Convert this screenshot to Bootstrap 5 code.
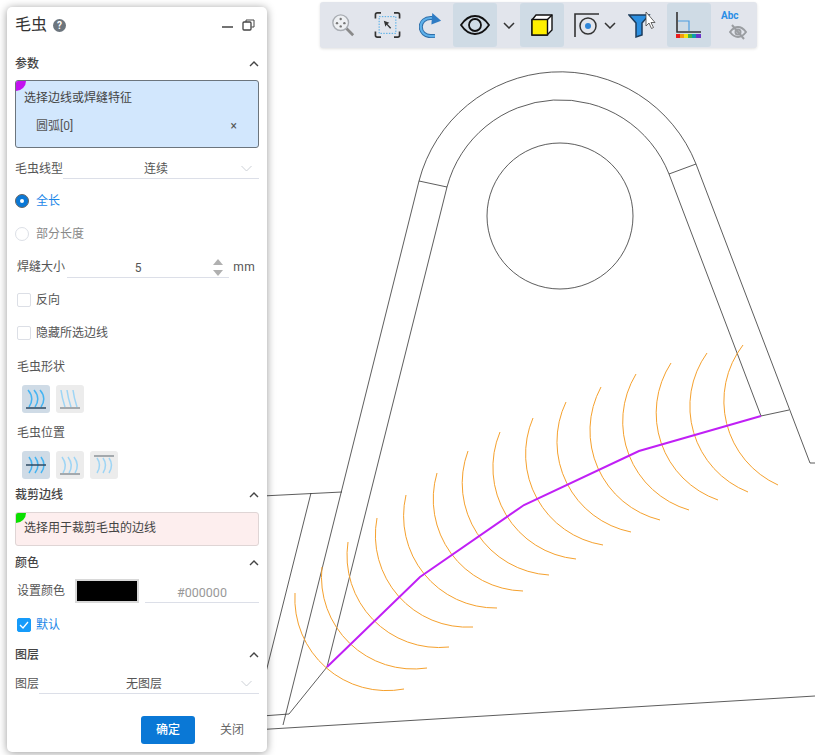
<!DOCTYPE html>
<html lang="zh">
<head>
<meta charset="utf-8">
<title>毛虫</title>
<link href="https://cdn.jsdelivr.net/npm/bootstrap@5.3.0/dist/css/bootstrap.min.css" rel="stylesheet">
<style>
html,body{margin:0;height:755px;overflow:hidden;background:#fff}
body{position:relative;width:815px;font-family:Roboto,"Noto Sans CJK SC",sans-serif;font-size:12px;color:#555}
.cad-canvas{position:absolute;left:0;top:0;width:815px;height:755px}
.side-panel{position:absolute;left:7px;top:7px;width:260px;height:745px;background:#fff;border-radius:5px;box-shadow:0 1px 8px rgba(0,0,0,.4);padding:0 8px;display:flex;flex-direction:column}
.panel-head{height:36px;flex:none;padding-right:4px}
.panel-title{font-size:16px;color:#333;line-height:36px}
.help-dot{width:13px;height:13px;border-radius:50%;background:#6c757d;color:#fff;font-size:10px;font-weight:700;line-height:13px;text-align:center;margin-left:6px}
.sec-head{height:24px;flex:none;font-weight:500;color:#444}
.pick-box{position:relative;border-radius:3px;padding-left:8px;flex:none;overflow:hidden;color:#444}
.pick-blue{height:68px;background:#d2e7fd;border:1px solid #6c757d;margin-top:4px}
.pick-red{height:34px;background:#fdeeee;border:1px solid #dfd5d5;margin-top:5px;line-height:31px}
.pick-corner{position:absolute;left:0;top:0;width:10px;height:10px;border-bottom-right-radius:10px}
.corner-m{background:#c311f0}
.corner-g{background:#0be000}
.pick-title{line-height:14px;margin-top:10px}
.pick-item{padding-left:12px;margin-top:14px;padding-right:21px;line-height:14px;color:#555}
.row-line{flex:none;display:flex;align-items:center}
.under{border-bottom:1px solid #dcdfe8;flex:1;height:19px;line-height:18px;position:relative}
.under-center{text-align:center}
.h-22{height:22px}
.h-33{height:33px}
.row-indent{padding-left:2px}
.round-mark{width:14px;height:14px;border-radius:50%;border:1px solid #dcdfe6;margin-right:7px;flex:none;background:#fff}
.round-on{background:#0a78d6;border:1px solid #666;position:relative}
.round-on::after{content:"";position:absolute;left:4px;top:4px;width:4px;height:4px;border-radius:50%;background:#fff}
.square-mark{width:14px;height:14px;border-radius:2px;border:1px solid #dcdfe6;margin-right:5px;flex:none;background:#fff;display:flex;align-items:center;justify-content:center}
.square-on{background:#169bfa;border-color:#169bfa}
.label-on{color:#1a86e8}
.label-dim{color:#888}
.icon-row{height:28px;flex:none;gap:6px;padding-left:7px}
.shape-btn{width:28px;height:28px;border-radius:3px;background:#ececec;display:flex;align-items:center;justify-content:center}
.shape-on{background:#cfdbe6}
.swatch{width:64px;height:24px;background:#000;border:2px solid #d8d8d8;margin:0 6px 0 10px}
.confirm-btn{width:54px;height:28px;background:#0a78d6;color:#fff;font-size:12px;padding:0;border:0;border-radius:3px;font-weight:500}
.close-btn{width:54px;height:28px;font-size:12px;color:#666;padding:0;border:0;background:transparent;margin-left:10px}
.tool-bar{position:absolute;left:320px;top:2px;width:437px;height:46px;background:#e2e5ec;border-radius:3px;box-shadow:0 1px 3px rgba(0,0,0,.12);display:flex;align-items:center}
.tool-slot{height:44px;display:flex;align-items:center;justify-content:center;flex:none;border-radius:3px}
.tool-on{background:#cfdbe5}
.w-44{width:44px}
.abc-mark{font-size:10px;font-weight:700;color:#2a8ee6;line-height:10px;position:absolute;left:10px;top:8px}
.spin-arrows{position:absolute;right:6px;top:-1px}
</style>
</head>
<body>
<svg class="cad-canvas" viewBox="0 0 815 755" fill="none">
  <g stroke="#333" stroke-width=".8">
    <circle cx="560" cy="216" r="73"/>
    <path d="M447 187A117 117 0 0 1 669 174"/>
    <path d="M419 181A146 146 0 0 1 696 164"/>
    <path d="M419 181L447 187M696 164L669 174"/>
    <path d="M419 181L283 725M447 187L327 667M327 667L289 714L262 716"/>
    <path d="M311 493L262 688M262 496L342 492"/>
    <path d="M262 729.500L815 696"/>
    <path d="M669 174L761 416L789 410M696 164L810 463L815 463"/>
  </g>
  <g stroke="#f5a12e" stroke-width="1">
    <path d="M295 593A92 92 0 0 0 404 689"/>
    <path d="M322 567A92 92 0 0 0 427 668"/>
    <path d="M348 542A92 92 0 0 0 449 647"/>
    <path d="M377 518A92 92 0 0 0 473 627"/>
    <path d="M406 495A92 92 0 0 0 497 608"/>
    <path d="M437 473A92 92 0 0 0 523 591"/>
    <path d="M468 451A92 92 0 0 0 549 575"/>
    <path d="M500 432A92 92 0 0 0 576 559"/>
    <path d="M533 418A92 92 0 0 0 603 545"/>
    <path d="M566 402A92 92 0 0 0 631 532"/>
    <path d="M601 387A92 92 0 0 0 660 520"/>
    <path d="M636 374A92 92 0 0 0 689 510"/>
    <path d="M671 363A92 92 0 0 0 718 500"/>
    <path d="M707 353A92 92 0 0 0 748 492"/>
    <path d="M743 345A92 92 0 0 0 778 485"/>
  </g>
  <path d="M327 667L420 577L524 505L639 451L761 416" stroke="#c020f5" stroke-width="2"/>
</svg>

<div class="tool-bar">
  <div class="tool-slot" style="width:46px">
    <svg width="24" height="24" viewBox="0 0 26 26" fill="none"><path d="M16 16L24 24" stroke="#8a8a8a" stroke-width="3"/><circle cx="10.500" cy="10.500" r="8.500" fill="#eef0f3" stroke="#a9adb3" stroke-width="1.500"/><circle cx="10.500" cy="6.500" r="1.300" fill="#777"/><circle cx="6.500" cy="11" r="1.300" fill="#777"/><circle cx="14.500" cy="11" r="1.300" fill="#777"/><circle cx="10.500" cy="14.500" r="1.300" fill="#777"/></svg>
  </div>
  <div class="tool-slot" style="width:42px">
    <svg width="27" height="26" viewBox="0 0 28 28" fill="none"><path d="M1 7V3Q1 1 3 1H7M21 1H25Q27 1 27 3V7M27 21V25Q27 27 25 27H21M7 27H3Q1 27 1 25V21" stroke="#333" stroke-width="1.800"/><rect x="5" y="5" width="18" height="18" stroke="#3da5e8" stroke-dasharray="1.500 1.500"/><path d="M10 9.500L16 11.500L14 12.800L18 17L16.800 18L13 13.800L11.800 15.800Z" fill="#333"/></svg>
  </div>
  <div class="tool-slot" style="width:45px">
    <svg width="23" height="25" viewBox="0 0 26 28" fill="none"><path d="M18 26H13C7 26 2 21.500 2 15.500S7 5.500 13 5.500H16" stroke="#2f6ea8" stroke-width="4.600"/><path d="M18 26H13C7 26 2 21.500 2 15.500S7 5.500 13 5.500H16" stroke="#5db0ea" stroke-width="2.400"/><path d="M15 0L25 8.500L14 13Z" fill="#2f7cc4"/></svg>
  </div>
  <div class="tool-slot tool-on w-44">
    <svg width="30" height="20" viewBox="0 0 30 20" fill="none" stroke="#111" stroke-width="1.800"><path d="M1 10C5 4 10 1 15 1S25 4 29 10C25 16 20 19 15 19S5 16 1 10Z"/><circle cx="15" cy="10" r="6"/></svg>
  </div>
  <div class="tool-slot" style="width:23px">
    <svg width="12" height="7" viewBox="0 0 12 7" fill="none"><path d="M1 1L6 6L11 1" stroke="#333" stroke-width="1.500"/></svg>
  </div>
  <div class="tool-slot tool-on w-44">
    <svg width="22" height="22" viewBox="0 0 22 22"><path d="M1 6L5 1H21V16L16 21H1Z" fill="#fff" stroke="#111" stroke-width="1.400"/><rect x="1" y="5.500" width="15.500" height="15.500" fill="#ffef00" stroke="#111" stroke-width="1.400"/><path d="M16.500 5.500L21 1" stroke="#111" stroke-width="1.400"/></svg>
  </div>
  <div class="tool-slot" style="width:10px"></div>
  <div class="tool-slot" style="width:25px">
    <svg width="25" height="24" viewBox="0 0 25 24" fill="none"><path d="M1 24V1H25" stroke="#333" stroke-width="1.600"/><circle cx="14" cy="13" r="8" stroke="#333" stroke-width="1.500"/><circle cx="14" cy="13" r="3" fill="#2f86d8"/></svg>
  </div>
  <div class="tool-slot" style="width:21px">
    <svg width="12" height="7" viewBox="0 0 12 7" fill="none"><path d="M1 1L6 6L11 1" stroke="#333" stroke-width="1.500"/></svg>
  </div>
  <div class="tool-slot justify-content-end" style="width:45px;padding-right:7px">
    <svg width="30" height="26" viewBox="0 0 30 26"><path d="M1 3H21L14 11V23L8 25V11Z" fill="#2c8fe0" stroke="#1d3d5c" stroke-width="1.500"/><path d="M18 0V14L21 11L23.500 16.500L25.500 15.500L23 10.500H27Z" fill="#fff" stroke="#444" stroke-width=".8"/></svg>
  </div>
  <div class="tool-slot tool-on w-44" style="margin-left:2px">
    <svg width="26" height="26" viewBox="0 0 26 26" fill="none"><path d="M1 0V20H25" stroke="#333" stroke-width="1.600"/><path d="M2 9H13V19" stroke="#4f9ddf" stroke-width="1.200"/><rect y="22" width="4" height="4" fill="#e81d1d"/><rect x="4" y="22" width="4" height="4" fill="#f39a11"/><rect x="8" y="22" width="4" height="4" fill="#f5e60f"/><rect x="12" y="22" width="4" height="4" fill="#45b348"/><rect x="16" y="22" width="4" height="4" fill="#0f9bab"/><rect x="20" y="22" width="5" height="4" fill="#6a35c9"/></svg>
  </div>
  <div class="tool-slot position-relative" style="width:44px">
    <span class="abc-mark">Abc</span>
    <svg class="position-absolute" style="left:18px;top:21px" width="18" height="16" viewBox="0 0 18 16" fill="none" stroke="#9a9da1" stroke-width="2"><path d="M1 8C4 4 6.500 3 9 3S14 4 17 8C14 12 11.500 13 9 13S4 12 1 8Z"/><circle cx="9" cy="8" r="2.500"/><path d="M3 1L15 15"/></svg>
  </div>
</div>

<div class="side-panel">
  <div class="panel-head d-flex align-items-center justify-content-between">
    <div class="d-flex align-items-center"><span class="panel-title">毛虫</span><span class="help-dot">?</span></div>
    <svg width="33" height="13" viewBox="0 0 33 13" fill="none" stroke="#444"><path d="M0 8H11" stroke-width="1.500"/><rect x="21" y="3" width="8" height="8" rx="1" stroke-width="1.300"/><path d="M24 3V1H32V8H29.500" stroke-width="1"/></svg>
  </div>
  <div class="sec-head d-flex align-items-center justify-content-between" style="margin-top:9px">
    <span>参数</span>
    <svg width="10" height="6" viewBox="0 0 10 6" fill="none"><path d="M1 5L5 1L9 5" stroke="#444" stroke-width="1.400"/></svg>
  </div>
  <div class="pick-box pick-blue">
    <span class="pick-corner corner-m"></span>
    <div class="pick-title">选择边线或焊缝特征</div>
    <div class="pick-item d-flex justify-content-between"><span>圆弧[0]</span><span>×</span></div>
  </div>
  <div class="row-line h-22" style="margin-top:10px">
    <span style="width:48px">毛虫线型</span>
    <div class="under under-center" style="padding-right:10px">连续<svg class="position-absolute" style="right:7px;top:5px" width="11" height="7" viewBox="0 0 11 7" fill="none"><path d="M.5 1L5.500 6L10.500 1" stroke="#ccd0d6"/></svg></div>
  </div>
  <div class="row-line h-33 mt-1"><span class="round-mark round-on"></span><span class="label-on">全长</span></div>
  <div class="row-line h-33"><span class="round-mark"></span><span class="label-dim">部分长度</span></div>
  <div class="row-line h-33 row-indent">
    <span style="width:50px">焊缝大小</span>
    <div class="under under-center" style="padding-right:20px;margin-top:3px">5<svg class="spin-arrows" width="10" height="19" viewBox="0 0 10 19"><path d="M5 1L10 7H0Z" fill="#b0b0b0"/><path d="M0 12H10L5 18Z" fill="#b0b0b0"/></svg></div>
    <span style="margin-left:4px;margin-right:4px;letter-spacing:.3px">mm</span>
  </div>
  <div class="row-line h-33 row-indent"><span class="square-mark"></span><span>反向</span></div>
  <div class="row-line h-33 row-indent"><span class="square-mark"></span><span>隐藏所选边线</span></div>
  <div class="row-line row-indent" style="height:35px">毛虫形状</div>
  <div class="d-flex icon-row" style="margin-top:1px">
    <div class="shape-btn shape-on"><svg width="22" height="22" viewBox="0 0 22 22" fill="none"><path d="M3 2Q10 10 4 19M9 2Q16 10 10 19M15 2Q22 10 16 19" stroke="#45b4f2" stroke-width="1.500"/><path d="M1 20H21" stroke="#2d4a63" stroke-width="1.500"/></svg></div>
    <div class="shape-btn"><svg width="22" height="22" viewBox="0 0 22 22" fill="none"><path d="M2 2Q3 10 6 19M8 2Q9 10 12 19M14 2Q15 10 18 19" stroke="#9ed5f5" stroke-width="1.500"/><path d="M1 20H21" stroke="#8d9399" stroke-width="1.500"/></svg></div>
  </div>
  <div class="row-line row-indent" style="height:38px;padding-top:2px">毛虫位置</div>
  <div class="d-flex icon-row">
    <div class="shape-btn shape-on"><svg width="22" height="22" viewBox="0 0 22 22" fill="none"><path d="M4 3Q10 11 4 19M10 3Q16 11 10 19M16 3Q22 11 16 19" stroke="#45b4f2" stroke-width="1.500"/><path d="M1 11H21" stroke="#2d4a63" stroke-width="1.500"/></svg></div>
    <div class="shape-btn"><svg width="22" height="22" viewBox="0 0 22 22" fill="none"><path d="M3 3Q9 11 4 19M9 3Q15 11 10 19M15 3Q21 11 16 19" stroke="#9ed5f5" stroke-width="1.500"/><path d="M1 20H21" stroke="#8d9399" stroke-width="1.500"/></svg></div>
    <div class="shape-btn"><svg width="22" height="22" viewBox="0 0 22 22" fill="none"><path d="M4 4Q9 11 4 19M10 4Q15 11 10 19M16 4Q21 11 16 19" stroke="#9ed5f5" stroke-width="1.500"/><path d="M1 2H21" stroke="#8d9399" stroke-width="1.500"/></svg></div>
  </div>
  <div class="sec-head d-flex align-items-center justify-content-between" style="margin-top:4px">
    <span>裁剪边线</span>
    <svg width="10" height="6" viewBox="0 0 10 6" fill="none"><path d="M1 5L5 1L9 5" stroke="#444" stroke-width="1.400"/></svg>
  </div>
  <div class="pick-box pick-red"><span class="pick-corner corner-g"></span>选择用于裁剪毛虫的边线</div>
  <div class="sec-head d-flex align-items-center justify-content-between" style="margin-top:5px">
    <span>颜色</span>
    <svg width="10" height="6" viewBox="0 0 10 6" fill="none"><path d="M1 5L5 1L9 5" stroke="#444" stroke-width="1.400"/></svg>
  </div>
  <div class="row-line row-indent" style="height:32px">
    <span style="width:48px">设置颜色</span><span class="swatch"></span>
    <div class="under under-center" style="color:#999;margin-top:5px;font-size:12.500px">#000000</div>
  </div>
  <div class="row-line row-indent" style="height:36px"><span class="square-mark square-on"><svg width="10" height="8" viewBox="0 0 10 8" fill="none"><path d="M1 4L4 7L9 1" stroke="#fff" stroke-width="1.300"/></svg></span><span class="label-on">默认</span></div>
  <div class="sec-head d-flex align-items-center justify-content-between">
    <span>图层</span>
    <svg width="10" height="6" viewBox="0 0 10 6" fill="none"><path d="M1 5L5 1L9 5" stroke="#444" stroke-width="1.400"/></svg>
  </div>
  <div class="row-line h-22" style="margin-top:5px">
    <span style="width:24px;margin-top:2px">图层</span>
    <div class="under under-center" style="padding-right:10px;margin-top:3px">无图层<svg class="position-absolute" style="right:7px;top:5px" width="11" height="7" viewBox="0 0 11 7" fill="none"><path d="M.5 1L5.500 6L10.500 1" stroke="#ccd0d6"/></svg></div>
  </div>
  <div class="d-flex justify-content-end" style="margin-top:22px">
    <button type="button" class="btn confirm-btn">确定</button>
    <button type="button" class="btn close-btn">关闭</button>
  </div>
</div>
<script src="https://cdn.jsdelivr.net/npm/bootstrap@5.3.0/dist/js/bootstrap.bundle.min.js"></script>
</body>
</html>
